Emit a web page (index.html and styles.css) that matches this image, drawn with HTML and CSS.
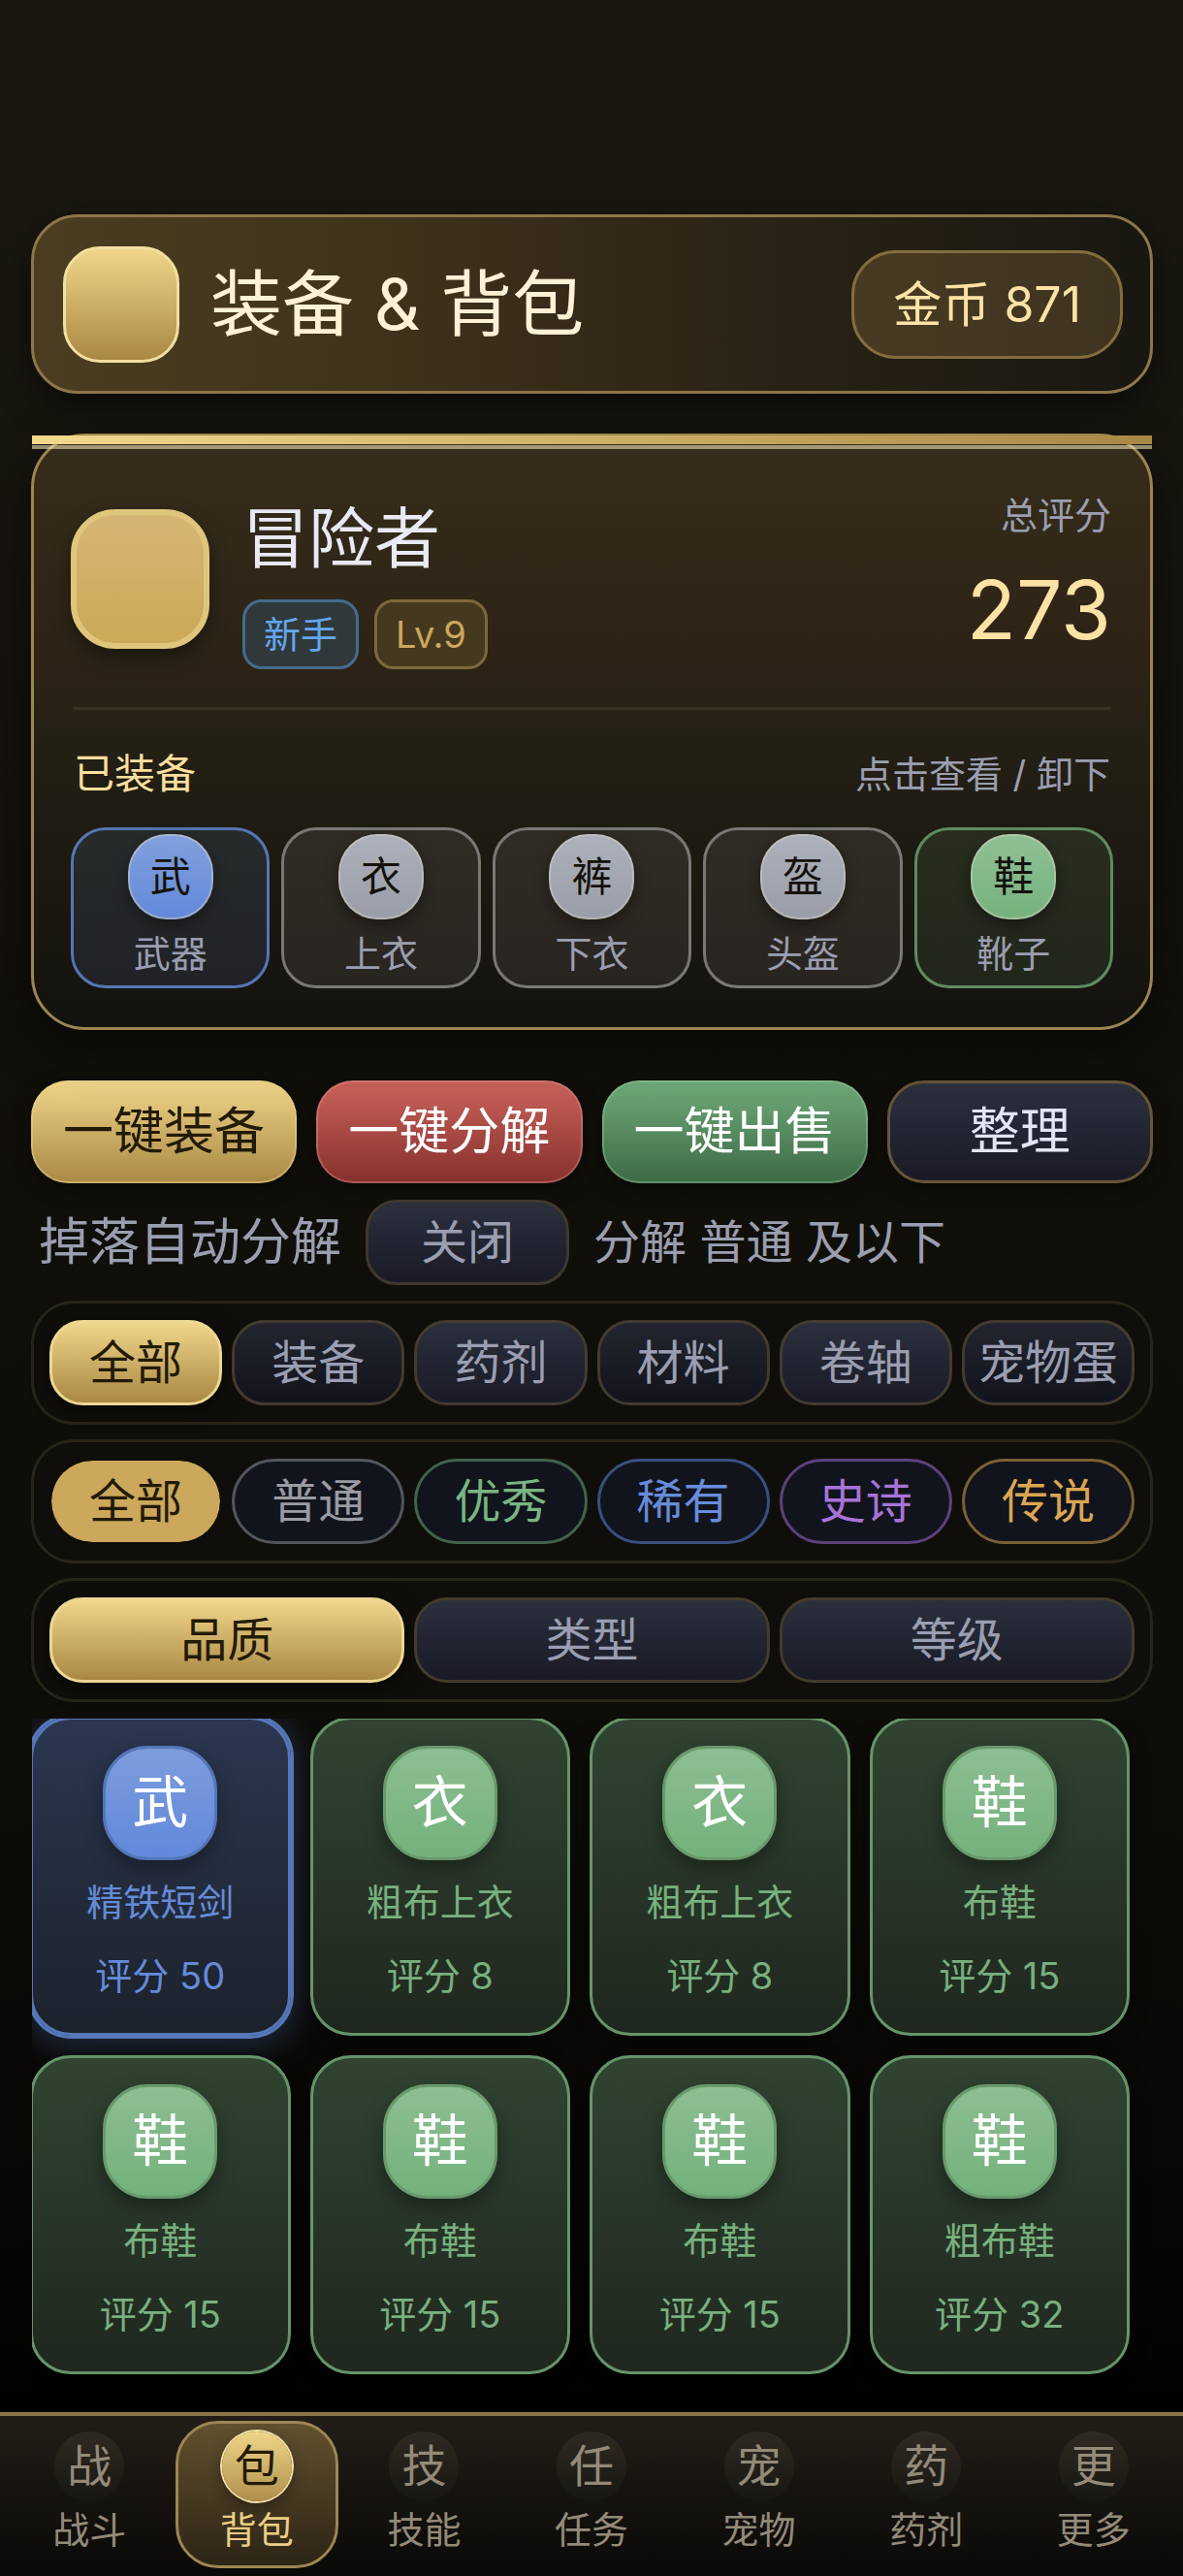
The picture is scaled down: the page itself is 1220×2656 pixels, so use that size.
FILE: index.html
```html
<!doctype html>
<html lang="zh-CN">
    <head>
        <meta charset="UTF-8"/>
        <meta name="viewport" content="width=device-width">
        <title>装备 &amp; 背包</title>
        <link rel="stylesheet" href="styles.css">
    </head>
    <body>
    <main class="page">
        <header class="topbar">
            <span class="logo"></span>
            <h1>装备 &amp; 背包</h1>
            <span class="coin">金币 871</span>
        </header>

        <section class="profile">
            <div class="hero">
                <span class="avatar"></span>
                <div class="info">
                    <h2>冒险者</h2>
                    <div class="tags">
                        <span class="tag blue">新手</span>
                        <span class="tag gold">Lv.9</span>
                    </div>
                </div>
                <div class="score">
                    <span>总评分</span>
                    <b>273</b>
                </div>
            </div>
            <div class="equip-head">
                <h3>已装备</h3>
                <span>点击查看 / 卸下</span>
            </div>
            <div class="slots">
                <button class="slot rare"><i>武</i>武器</button>
                <button class="slot"><i>衣</i>上衣</button>
                <button class="slot"><i>裤</i>下衣</button>
                <button class="slot"><i>盔</i>头盔</button>
                <button class="slot fine"><i>鞋</i>靴子</button>
            </div>
        </section>

        <div class="actions">
            <button class="act act-gold">一键装备</button>
            <button class="act act-red">一键分解</button>
            <button class="act act-green">一键出售</button>
            <button class="act">整理</button>
        </div>

        <div class="auto">
            <label for="auto-btn">掉落自动分解</label>
            <button id="auto-btn">关闭</button>
            <span>分解 普通 及以下</span>
        </div>

        <div class="bar kinds">
            <button class="on">全部</button>
            <button>装备</button>
            <button>药剂</button>
            <button>材料</button>
            <button>卷轴</button>
            <button>宠物蛋</button>
        </div>
        <div class="bar grades">
            <button class="on">全部</button>
            <button class="g-common">普通</button>
            <button class="g-fine">优秀</button>
            <button class="g-rare">稀有</button>
            <button class="g-epic">史诗</button>
            <button class="g-legend">传说</button>
        </div>
        <div class="bar sorts">
            <button class="on">品质</button>
            <button>类型</button>
            <button>等级</button>
        </div>

        <div class="bag">
            <div class="grid">
                <button class="item rare on"><i>武</i><span>精铁短剑</span><span>评分 50</span></button>
                <button class="item"><i>衣</i><span>粗布上衣</span><span>评分 8</span></button>
                <button class="item"><i>衣</i><span>粗布上衣</span><span>评分 8</span></button>
                <button class="item"><i>鞋</i><span>布鞋</span><span>评分 15</span></button>
                <button class="item"><i>鞋</i><span>布鞋</span><span>评分 15</span></button>
                <button class="item"><i>鞋</i><span>布鞋</span><span>评分 15</span></button>
                <button class="item"><i>鞋</i><span>布鞋</span><span>评分 15</span></button>
                <button class="item"><i>鞋</i><span>粗布鞋</span><span>评分 32</span></button>
            </div>
        </div>
    </main>

    <nav class="tabs">
        <a href="#"><i>战</i>战斗</a>
        <a href="#" class="on"><i>包</i>背包</a>
        <a href="#"><i>技</i>技能</a>
        <a href="#"><i>任</i>任务</a>
        <a href="#"><i>宠</i>宠物</a>
        <a href="#"><i>药</i>药剂</a>
        <a href="#"><i>更</i>更多</a>
    </nav>
    </body>
</html>
```
FILE: styles.css
```css
* {
    box-sizing: border-box;
    margin: 0;
    padding: 0;
}
body {
    min-height: 100vh;
    display: flex;
    flex-direction: column;
    background: linear-gradient(#191610, #1a1711 8%, #110f0a 42%, #0d0c08 70%, #060504 90%, #000 94%);
    color: #9a9eb0;
    font-family: Inter, "Noto Sans CJK SC", sans-serif;
    font-size: 38px;
    line-height: 48px;
}
button {
    font: inherit;
    color: inherit;
    background: none;
    cursor: pointer;
}
h1, h2, h3, b, i {
    font-weight: 400;
    font-style: normal;
}
.page {
    flex: 1;
    padding: 221px 31px 0 32px;
}

/* 顶部标题 */
.topbar {
    display: flex;
    align-items: center;
    height: 185px;
    padding: 0 28px 0 30px;
    border: 3px solid #8b7749;
    border-radius: 48px;
    background: linear-gradient(90deg, #4a3d20, #40331c 30%, #2b2315 65%, #191711);
    box-shadow: 0 12px 36px rgba(0,0,0,.5);
}
.logo {
    width: 120px;
    height: 120px;
    border: 3px solid #f1dfa0;
    border-radius: 38px;
    background: linear-gradient(#efd68a, #a98843);
}
.topbar h1 {
    flex: 1;
    margin-left: 32px;
    font-size: 74px;
    line-height: 94px;
    padding-bottom: 2px;
    color: #fff1d6;
}
.coin {
    padding: 0 40px;
    border: 3px solid #846d3d;
    border-radius: 46px;
    background: rgba(205,165,95,.2);
    color: #fde2a5;
    font-size: 50px;
    line-height: 106px;
}

/* 角色卡片 */
.profile {
    position: relative;
    margin-top: 41px;
    padding: 57px 38px 40px;
    border: 3px solid #9b8653;
    border-radius: 56px;
    background: linear-gradient(#362d1b, #2a2115 47%, #242015 50%, #14120e);
    box-shadow: 0 16px 48px rgba(0,0,0,.55);
}
.profile::before {
    content: "";
    position: absolute;
    top: -1px;
    left: -2px;
    right: -2px;
    height: 14px;
    background:
        linear-gradient(90deg, #f2d98c, #a98843) top / 100% 9px no-repeat,
        linear-gradient(rgba(255,240,195,.55), rgba(255,240,195,.55)) bottom / 100% 4px no-repeat;
}
.hero {
    display: flex;
    align-items: center;
}
.avatar {
    width: 143px;
    height: 144px;
    margin-bottom: 4px;
    border: 6px solid #dfc67c;
    border-radius: 46px;
    background: linear-gradient(#d5b573, #cba958);
    box-shadow: 0 8px 20px rgba(0,0,0,.4);
}
.info {
    flex: 1;
    margin-left: 34px;
}
.info h2 {
    font-size: 68px;
    line-height: 96px;
    color: #e8e9f3;
}
.tags {
    display: flex;
    gap: 16px;
    margin-top: 15px;
}
.tag {
    padding: 0 19px;
    border: 3px solid;
    border-radius: 20px;
    line-height: 66px;
}
.tag.blue {
    color: #63a7f0;
    border-color: #466b8e;
    background: #30383a;
}
.tag.gold {
    color: #cda75c;
    border-color: #7c683b;
    background: #44381f;
}
.score {
    height: 183px;
    padding-right: 2px;
    text-align: right;
}
.score span, .score b {
    display: block;
}
.score b {
    margin-top: 22px;
    font-size: 84px;
    line-height: 104px;
    color: #fde2a5;
}
.equip-head {
    display: flex;
    justify-content: space-between;
    align-items: center;
    margin: 39px 3px 27px;
    padding-top: 38px;
    border-top: 3px solid #393020;
}
.equip-head h3 {
    font-size: 42px;
    line-height: 56px;
    color: #fbdf9f;
}
.slots {
    display: grid;
    grid-template-columns: repeat(5, 1fr);
    gap: 12px;
}
.slot {
    display: flex;
    flex-direction: column;
    align-items: center;
    height: 166px;
    padding-top: 4px;
    border: 3px solid #7a7876;
    border-radius: 36px;
    background: linear-gradient(#302c25, #282420);
}
.slot i {
    width: 88px;
    height: 88px;
    margin-bottom: 11px;
    border: 2px solid rgba(210,205,190,.5);
    border-radius: 40px;
    background: linear-gradient(#adb1bb, #9a9da8) border-box;
    box-shadow: 0 6px 16px rgba(0,0,0,.4);
    color: #14120a;
    font-size: 42px;
    line-height: 84px;
}
.slot.rare {
    border-color: #5576b2;
    background: linear-gradient(#272b2b, #202227);
}
.slot.rare i {
    background: linear-gradient(#82a0dd, #6189da) border-box;
}
.slot.fine {
    border-color: #5f8b62;
    background: linear-gradient(#2a2e1f, #21261b);
}
.slot.fine i {
    background: linear-gradient(#90c096, #74b27d) border-box;
}

/* 操作按钮 */
.actions {
    display: grid;
    grid-template-columns: repeat(4, 1fr);
    gap: 20px;
    margin-top: 52px;
}
.act {
    height: 106px;
    border: 3px solid #665538;
    border-radius: 38px;
    background: linear-gradient(#2c313d, #191a26);
    box-shadow: 0 6px 20px rgba(0,0,0,.4);
    color: #e2e5f2;
    font-size: 52px;
}
.act-gold {
    border: 2px solid rgba(235,210,140,.5);
    background: linear-gradient(#efd68a, #a98843) border-box;
    color: #231a07;
}
.act-red {
    border: 2px solid rgba(225,150,150,.4);
    background: linear-gradient(#cb635b, #85302d) border-box;
    color: #fff;
}
.act-green {
    border: 2px solid rgba(160,215,170,.35);
    background: linear-gradient(#70aa7b, #3c6a45) border-box;
    color: #fff;
}
.auto {
    display: flex;
    align-items: center;
    margin: 17px 0 16px;
    padding-left: 8px;
    font-size: 48px;
}
.auto label {
    font-size: 52px;
}
.auto button {
    width: 210px;
    height: 88px;
    margin: 0 25px;
    border: 3px solid #3f382c;
    border-radius: 32px;
    background: linear-gradient(#2b303c, #191a26);
}

/* 筛选 */
.bar {
    display: grid;
    grid-template-columns: repeat(6, 1fr);
    gap: 10px;
    margin-bottom: 15px;
    padding: 17px 16px;
    border: 3px solid #292419;
    border-radius: 44px;
    background: #0f0e0a;
    font-size: 48px;
}
.bar button {
    height: 88px;
    border: 3px solid #433b2e;
    border-radius: 34px;
    background: linear-gradient(#2b303c, #191a26);
    white-space: nowrap;
}
.kinds button:nth-child(even) {
    background: linear-gradient(#22252f, #12131c);
}
.sorts {
    grid-template-columns: repeat(3, 1fr);
}
.bar .on {
    border-color: #ecd793;
    background: linear-gradient(#efd68a, #a98843);
    box-shadow: 0 6px 20px rgba(0,0,0,.5);
    color: #231a07;
}
.grades button {
    border-radius: 44px;
    background: #11141c;
}
.grades .on {
    border: 2px solid #0f0e0a;
    background: #cba85b padding-box;
    box-shadow: none;
}
.grades .g-common { color: #9a9ba3; border-color: #53555c; }
.grades .g-fine { color: #79b582; border-color: #41634a; }
.grades .g-rare { color: #678cda; border-color: #39507f; }
.grades .g-epic { color: #a873d9; border-color: #5d417b; }
.grades .g-legend { color: #dba653; border-color: #7a6035; }

/* 背包格子 */
.bag {
    overflow: hidden;
    margin: 17px 0 0 1px;
    padding-bottom: 37px;
}
.grid {
    display: grid;
    grid-template-columns: repeat(4, 1fr);
    gap: 20px;
    margin: -2px 24px 0 -2px;
}
.item {
    display: flex;
    flex-direction: column;
    align-items: center;
    height: 329px;
    padding-top: 27px;
    border: 3px solid #669469;
    border-radius: 42px;
    background: linear-gradient(#304431, #1f271e);
    box-shadow: 0 6px 20px rgba(0,0,0,.4);
    color: #78b07f;
}
.item i {
    width: 118px;
    height: 118px;
    border: 3px solid #69996c;
    border-radius: 46px;
    background: linear-gradient(#8dbe94, #73b17b);
    box-shadow: 0 8px 20px rgba(0,0,0,.35);
    color: #fff;
    font-size: 58px;
    line-height: 110px;
}
.item span {
    margin-top: 19px;
}
.item span + span {
    margin-top: 28px;
}
.item.rare {
    background: linear-gradient(#2b3750, #1c222c);
    color: #658bd8;
}
.item.rare i {
    border-color: #5475b8;
    background: linear-gradient(#7d9cdd, #6189da);
}
.item.on {
    border-color: #5677b9;
    box-shadow: 0 0 0 3px #5677b9, 0 6px 36px 4px rgba(80,120,190,.35);
}

/* 底部导航 */
.tabs {
    display: flex;
    gap: 4px;
    height: 169px;
    padding: 5px 8px 8px;
    border-top: 4px solid #8b7549;
    background: linear-gradient(#221d17, #0a0907);
}
.tabs a {
    flex: 1;
    display: flex;
    flex-direction: column;
    align-items: center;
    gap: 5px;
    padding-top: 8px;
    border: 3px solid transparent;
    border-radius: 44px;
    color: #938a79;
    text-decoration: none;
}
.tabs i {
    width: 72px;
    height: 72px;
    border-radius: 50%;
    background: linear-gradient(#2f2a21, #171611);
    font-size: 46px;
    line-height: 70px;
    text-align: center;
}
.tabs .on {
    border-color: #9c8653;
    background: linear-gradient(#62502e, #2c2416);
    color: #ebcd85;
}
.tabs .on i {
    background: linear-gradient(#efd68a, #b08f4b);
    box-shadow: 0 0 0 2px #f3e1a8, 0 6px 16px rgba(0,0,0,.4);
    color: #231a07;
}
```
